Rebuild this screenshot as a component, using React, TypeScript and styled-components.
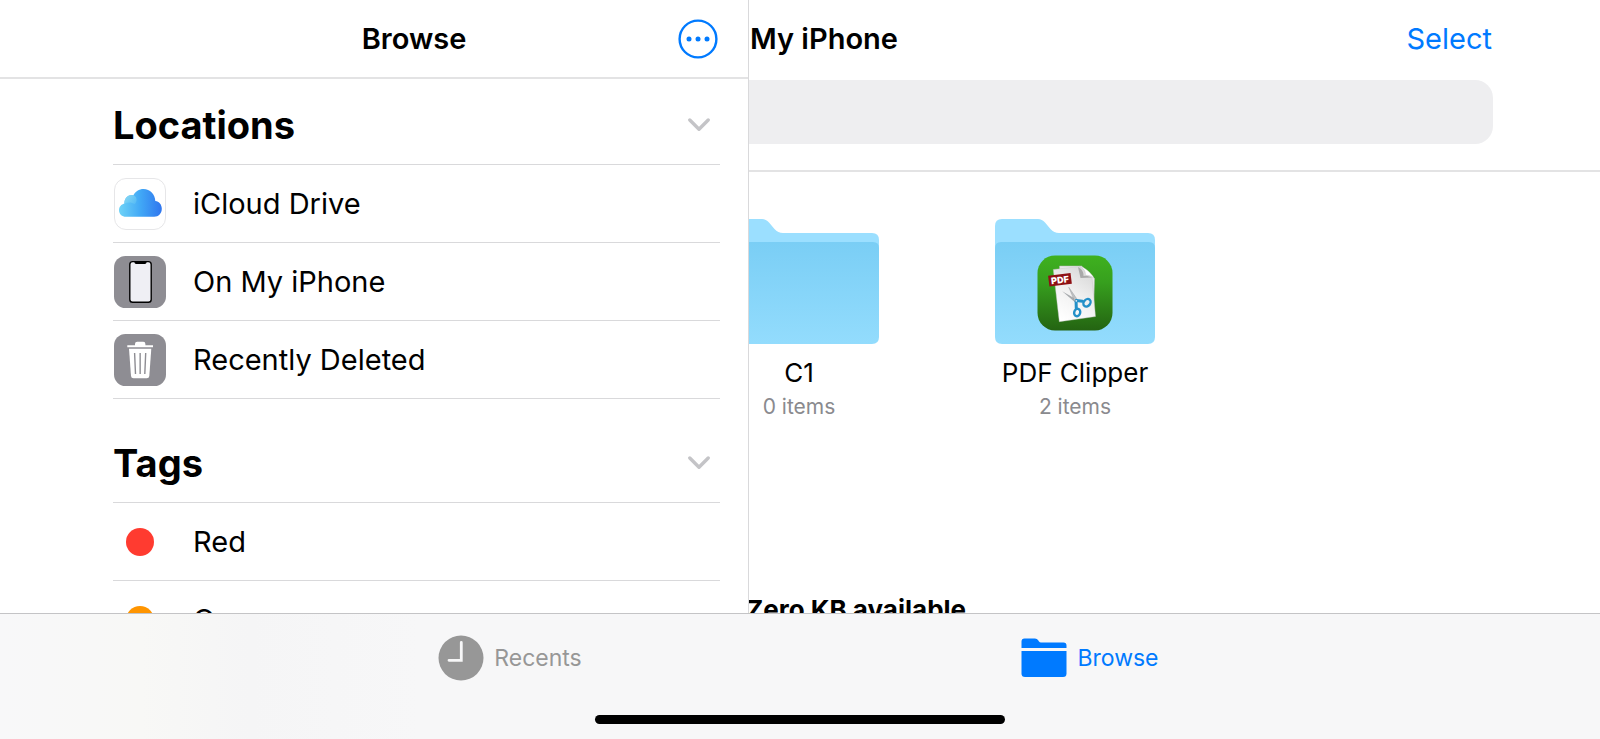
import React, { useId } from 'react';
import styled, { createGlobalStyle } from 'styled-components';

const GlobalStyle = createGlobalStyle`
  *, *::before, *::after { box-sizing: border-box; }
  body {
    margin: 0;
    background: #fff;
    color: #000;
    font-family: Inter, "Liberation Sans", sans-serif;
  }
  button, input { font: inherit; color: inherit; }
  h1, h2, p, ul { margin: 0; padding: 0; }
  svg { display: block; }
`;

const blue = '#007aff';
const separator = '#d9d9db';

const Screen = styled.div`
  display: grid;
  grid-template-rows: minmax(0, 1fr) auto;
  height: 100vh;
`;

const SplitView = styled.div`
  display: grid;
  grid-template-columns: 749px minmax(0, 1fr);
  min-height: 0;
`;

const PlainButton = styled.button`
  display: flex;
  align-items: center;
  padding: 0;
  border: 0;
  background: none;
  cursor: pointer;
`;

const Sidebar = styled.aside`
  display: flex;
  flex-direction: column;
  min-height: 0;
  overflow: hidden;
  border-right: 1px solid ${separator};
`;

const SidebarBar = styled.header`
  display: grid;
  grid-template-columns: 40px 1fr 40px;
  align-items: center;
  flex: none;
  height: 79px;
  padding: 0 30px 0 110px;
  border-bottom: 2px solid #e3e3e4;
`;

const BarTitle = styled.h1`
  grid-column: 2;
  font-size: 29px;
  line-height: 36px;
  font-weight: 600;
  text-align: center;
  white-space: nowrap;
`;

const SidebarBody = styled.div`
  flex: 1;
  min-height: 0;
  overflow: hidden;
  padding: 0 28px 0 113px;
`;

const Section = styled.section`
  margin-bottom: 18px;
`;

const SectionHead = styled.div`
  display: flex;
  align-items: center;
  justify-content: space-between;
  height: 86px;
  padding: 7px 10px 0 0;
  border-bottom: 1px solid ${separator};
`;

const SectionTitle = styled.h2`
  font-size: 38px;
  line-height: 46px;
  font-weight: 700;
`;

const List = styled.ul`
  list-style: none;
`;

const Row = styled.li`
  border-bottom: 1px solid ${separator};
`;

const RowButton = styled(PlainButton)`
  width: 100%;
  height: 77px;
  gap: 27px;
  padding-left: 1px;
  font-size: 29px;
  line-height: 36px;
`;

const IconSlot = styled.span`
  display: grid;
  place-items: center;
  width: 52px;
  height: 52px;
`;

const Dot = styled.span<{ $color: string }>`
  width: 28px;
  height: 28px;
  border-radius: 50%;
  background: ${(p) => p.$color};
`;

const Main = styled.main`
  min-width: 0;
  min-height: 0;
  overflow: hidden;
`;

const Pane = styled.div`
  margin-left: -88px;
`;

const PaneBar = styled.header`
  display: flex;
  align-items: center;
  justify-content: space-between;
  height: 79px;
  padding: 0 108px 2px 89px;
`;

const SelectButton = styled(PlainButton)`
  color: ${blue};
  font-size: 29px;
  line-height: 36px;
`;

const SearchArea = styled.div`
  padding: 1px 107px 26px 60px;
  border-bottom: 2px solid #e3e3e4;
`;

const SearchField = styled.input`
  display: block;
  width: 100%;
  height: 64px;
  padding: 0 24px;
  border: 0;
  border-radius: 18px;
  background: #eeeef0;
  font-size: 29px;
  outline: none;
`;

const FolderGrid = styled.ul`
  && { padding-top: 47px; }
  display: grid;
  grid-template-columns: repeat(auto-fill, 276px);
  list-style: none;
`;

const FolderItem = styled.li`
  display: flex;
  justify-content: center;
`;

const FolderButton = styled(PlainButton)`
  flex-direction: column;
`;

const FolderName = styled.span`
  margin-top: 12px;
  font-size: 26px;
  line-height: 34px;
`;

const FolderMeta = styled.span`
  margin-top: 3px;
  font-size: 21px;
  line-height: 28px;
  color: #8a8a8e;
`;

const Storage = styled.p`
  && { padding: 173px 0 0 85px; }
  font-size: 26px;
  line-height: 32px;
  font-weight: 700;
  white-space: nowrap;
`;

const TabBar = styled.footer`
  height: 126px;
  display: flex;
  flex-direction: column;
  align-items: center;
  justify-content: space-between;
  padding: 21px 0 15px;
  border-top: 1px solid #c4c4c6;
  background: linear-gradient(90deg, #f8f8f9 0, #f8f8f6 140px, #f5f5f6 250px, #f7f7f8 420px);
`;

const Tabs = styled.nav`
  display: grid;
  grid-template-columns: 1fr 1fr;
  justify-items: center;
  width: 100%;
  max-width: 1160px;
`;

const Tab = styled(PlainButton)<{ $active?: boolean }>`
  gap: 10px;
  height: 46px;
  color: ${(p) => (p.$active ? blue : '#979797')};
  font-size: 23px;
  line-height: 28px;
`;

const HomeIndicator = styled.div`
  width: 410px;
  max-width: 60%;
  height: 9px;
  border-radius: 5px;
  background: #000;
`;

const MoreIcon = () => (
  <svg width="40" height="40" viewBox="0 0 40 40" aria-hidden="true">
    <circle cx="20" cy="20" r="18.4" fill="none" stroke={blue} strokeWidth="2.4" />
    <g fill={blue}>
      <circle cx="11" cy="20" r="2.5" />
      <circle cx="20" cy="20" r="2.5" />
      <circle cx="29" cy="20" r="2.5" />
    </g>
  </svg>
);

const ChevronIcon = () => (
  <svg width="22" height="14" viewBox="0 0 22 14" aria-hidden="true">
    <path d="M1.8 2 L11 11.2 L20.2 2" fill="none" stroke="#c4c4c7" strokeWidth="3.4" strokeLinecap="round" strokeLinejoin="round" />
  </svg>
);

const CloudIcon = () => {
  const id = useId();
  return (
    <svg width="52" height="52" viewBox="0 0 52 52" aria-hidden="true">
      <defs>
        <linearGradient id={`${id}a`} x1="5" y1="0" x2="48" y2="0" gradientUnits="userSpaceOnUse">
          <stop offset="0" stopColor="#6fd3f7" />
          <stop offset="0.5" stopColor="#41a8f6" />
          <stop offset="1" stopColor="#2f75ee" />
        </linearGradient>
        <linearGradient id={`${id}b`} x1="10" y1="17" x2="23" y2="30" gradientUnits="userSpaceOnUse">
          <stop offset="0" stopColor="#8fd9f2" />
          <stop offset="1" stopColor="#5cc4f6" stopOpacity="0.3" />
        </linearGradient>
      </defs>
      <rect x="0.5" y="0.5" width="51" height="51" rx="11.5" fill="#fff" stroke="#e6e6e8" />
      <path
        d="M12 38.8 C8 38.8 5 35.9 5 32.2 C5 28.9 7.3 26.3 10.3 25.5 C10.2 20.5 13.4 16.9 17.3 16.9 C18.1 16.9 18.8 17 19.4 17.3 C21.2 13.5 25 11 29.5 11 C36 11 41.1 16.1 41.3 23 C45.2 23.3 47.8 26.7 47.8 30.8 C47.8 35.3 44.6 38.8 40.2 38.8 Z"
        fill={`url(#${id}a)`}
      />
      <path d="M10.3 25.5 C10.2 20.5 13.4 16.9 17.3 16.9 C20.5 16.9 22.6 19 22.6 21.8 C22.6 23.6 21.8 25.2 20.5 26 C17.8 23.9 13.7 24 10.3 25.5 Z" fill={`url(#${id}b)`} />
    </svg>
  );
};

const PhoneIcon = () => (
  <svg width="52" height="52" viewBox="0 0 52 52" aria-hidden="true">
    <rect width="52" height="52" rx="11.5" fill="#8e8d93" />
    <rect x="15.8" y="5.6" width="21.4" height="40.6" rx="2.8" fill="#efeff4" stroke="#000" strokeWidth="1.4" />
    <path d="M20.5 5.6 H32.5 V6.3 Q32.5 7.9 30.9 7.9 H22.1 Q20.5 7.9 20.5 6.3 Z" fill="#000" />
  </svg>
);

const TrashIcon = () => (
  <svg width="52" height="52" viewBox="0 0 52 52" aria-hidden="true">
    <rect width="52" height="52" rx="11.5" fill="#8e8d93" />
    <path d="M13.3 11.3 H21 V10 Q21 7.8 23.2 7.8 H29.2 Q31.4 7.8 31.4 10 V11.3 H39 V13.2 H13.3 Z" fill="#fff" />
    <path d="M15 14.8 H37.3 L35.3 42 Q35.1 44.3 32.8 44.3 H19.5 Q17.2 44.3 17 42 Z" fill="#fff" />
    <path d="M20.6 19 L21.5 40 M26.15 19 V40 M31.7 19 L30.8 40" stroke="#8e8d93" strokeWidth="1.4" />
  </svg>
);

const ClipperArt = () => {
  const id = useId();
  return (
    <g transform="translate(42.500 36.500)">
      <defs>
        <linearGradient id={`${id}g`} x1="0" y1="0" x2="0" y2="1">
          <stop offset="0" stopColor="#3fb11f" />
          <stop offset="0.35" stopColor="#37a01e" />
          <stop offset="1" stopColor="#246412" />
        </linearGradient>
        <linearGradient id={`${id}p`} x1="0.8" y1="0" x2="0.3" y2="1">
          <stop offset="0" stopColor="#d6d6d6" />
          <stop offset="0.5" stopColor="#f0f0f0" />
          <stop offset="1" stopColor="#fff" />
        </linearGradient>
      </defs>
      <rect width="75" height="75" rx="17.5" fill={`url(#${id}g)`} />
      <path d="M22 10.5 H44 L57 23 L56 59 L24 61 Z" fill="#e9e9e9" stroke="#b4b4b4" strokeWidth="0.5" />
      <path d="M15.800 14 L41 11.2 C46 12 53 18 54.5 22 L58 61 L21.8 66.2 Z" fill={`url(#${id}p)`} stroke="#c2c2c2" strokeWidth="0.4" />
      <path d="M40.5 11.5 L43 22.5 L54.5 22 C51 20.5 48 20 46 20.5 C46.5 17 44 13 40.5 11.5 Z" fill="#a9a9a9" />
      <path d="M42 10.8 C46.5 13 48.5 16.5 47.8 19.8 C51 19.5 54 20.6 56.5 22.6 C54 17.5 47 11.5 42 10.8 Z" fill="#fff" stroke="#bbb" strokeWidth="0.4" />
      <g transform="rotate(-7 22.5 24.5)">
        <rect x="11.2" y="18.9" width="22.6" height="10.8" fill="#8e1014" />
        <text x="22.5" y="27.7" textAnchor="middle" fontFamily="Inter, sans-serif" fontWeight="900" fontSize="9" fill="#fff">PDF</text>
      </g>
      <path d="M24.7 35.8 L39.5 44.2 L37.5 46.8 Z" fill="#a7aaad" />
      <path d="M31.3 31.8 L40.5 45 L37.6 46.8 Z" fill="#bfc2c4" stroke="#8d9194" strokeWidth="0.4" />
      <g fill="none" stroke="#2490c8" strokeWidth="2.4" strokeLinecap="round">
        <path d="M38.8 45 L45 45.8" strokeWidth="3" />
        <path d="M38.6 46 L38.8 53" strokeWidth="3" />
        <ellipse cx="49.5" cy="47.3" rx="4.1" ry="3.2" transform="rotate(-50 49.5 47.3)" />
        <ellipse cx="39.7" cy="57" rx="3" ry="3.8" transform="rotate(15 39.7 57)" />
      </g>
      <circle cx="38.8" cy="45.3" r="0.9" fill="#e8eef2" />
    </g>
  );
};

const FolderIcon = ({ children }: { children?: React.ReactNode }) => {
  const id = useId();
  return (
    <svg width="160" height="125" viewBox="0 0 160 125" aria-hidden="true">
      <defs>
        <linearGradient id={id} x1="0" y1="0" x2="0" y2="1">
          <stop offset="0" stopColor="#7acef5" />
          <stop offset="1" stopColor="#93dcfd" />
        </linearGradient>
      </defs>
      <path
        d="M0 7 Q0 0 7 0 H43 Q47 0 50 3.5 L55.5 10 Q59 14 64 14 H153 Q160 14 160 21 V60 H0 Z"
        fill="#9bdfff"
      />
      <path d="M0 29 Q0 23 6 23 H154 Q160 23 160 29 V118 Q160 125 153 125 H7 Q0 125 0 118 Z" fill={`url(#${id})`} />
      {children}
    </svg>
  );
};

const ClockIcon = () => (
  <svg width="46" height="46" viewBox="0 0 46 46" aria-hidden="true">
    <circle cx="23" cy="23" r="22.5" fill="#979797" />
    <path d="M23.3 7.5 V25.3 H11" fill="none" stroke="#f7f7f8" strokeWidth="2.8" strokeLinecap="round" strokeLinejoin="miter" />
  </svg>
);

const FolderTabIcon = () => (
  <svg width="46" height="46" viewBox="0 0 46 46" aria-hidden="true">
    <path d="M0.5 13 V6.5 Q0.5 3.5 3.5 3.5 H14 Q16 3.5 17 5 L18 6.5 Q18.7 7.5 20 7.5 H42.5 Q45.5 7.5 45.5 10.5 V13 Z" fill={blue} />
    <path d="M0.5 16 H45.5 V38.5 Q45.5 42 42 42 H4 Q0.5 42 0.5 38.5 Z" fill={blue} />
  </svg>
);

type Entry = { label: string; icon: React.ReactNode };

const locations: Entry[] = [
  { label: 'iCloud Drive', icon: <CloudIcon /> },
  { label: 'On My iPhone', icon: <PhoneIcon /> },
  { label: 'Recently Deleted', icon: <TrashIcon /> },
];

const tags: Entry[] = [
  { label: 'Red', icon: <Dot $color="#ff3b30" /> },
  { label: 'Orange', icon: <Dot $color="#ff9500" /> },
];

const SidebarSection = ({ title, entries }: { title: string; entries: Entry[] }) => (
  <Section>
    <SectionHead>
      <SectionTitle>{title}</SectionTitle>
      <PlainButton type="button" aria-label={`Collapse ${title}`}>
        <ChevronIcon />
      </PlainButton>
    </SectionHead>
    <List>
      {entries.map((entry) => (
        <Row key={entry.label}>
          <RowButton type="button">
            <IconSlot>{entry.icon}</IconSlot>
            {entry.label}
          </RowButton>
        </Row>
      ))}
    </List>
  </Section>
);

const folders = [
  { name: 'C1', meta: '0 items', art: null },
  { name: 'PDF Clipper', meta: '2 items', art: <ClipperArt /> },
];

export default function App() {
  return (
    <Screen>
      <GlobalStyle />
      <SplitView>
        <Sidebar>
          <SidebarBar>
            <BarTitle>Browse</BarTitle>
            <PlainButton type="button" aria-label="More">
              <MoreIcon />
            </PlainButton>
          </SidebarBar>
          <SidebarBody>
            <SidebarSection title="Locations" entries={locations} />
            <SidebarSection title="Tags" entries={tags} />
          </SidebarBody>
        </Sidebar>
        <Main>
          <Pane>
            <PaneBar>
              <BarTitle as="h2">My iPhone</BarTitle>
              <SelectButton type="button">Select</SelectButton>
            </PaneBar>
            <SearchArea>
              <SearchField type="search" aria-label="Search" />
            </SearchArea>
            <FolderGrid>
              {folders.map((folder) => (
                <FolderItem key={folder.name}>
                  <FolderButton type="button">
                    <FolderIcon>{folder.art}</FolderIcon>
                    <FolderName>{folder.name}</FolderName>
                    <FolderMeta>{folder.meta}</FolderMeta>
                  </FolderButton>
                </FolderItem>
              ))}
            </FolderGrid>
            <Storage>Zero KB available</Storage>
          </Pane>
        </Main>
      </SplitView>
      <TabBar>
        <Tabs aria-label="Views">
          <Tab type="button">
            <ClockIcon />
            Recents
          </Tab>
          <Tab type="button" $active aria-current="page">
            <FolderTabIcon />
            Browse
          </Tab>
        </Tabs>
        <HomeIndicator />
      </TabBar>
    </Screen>
  );
}
